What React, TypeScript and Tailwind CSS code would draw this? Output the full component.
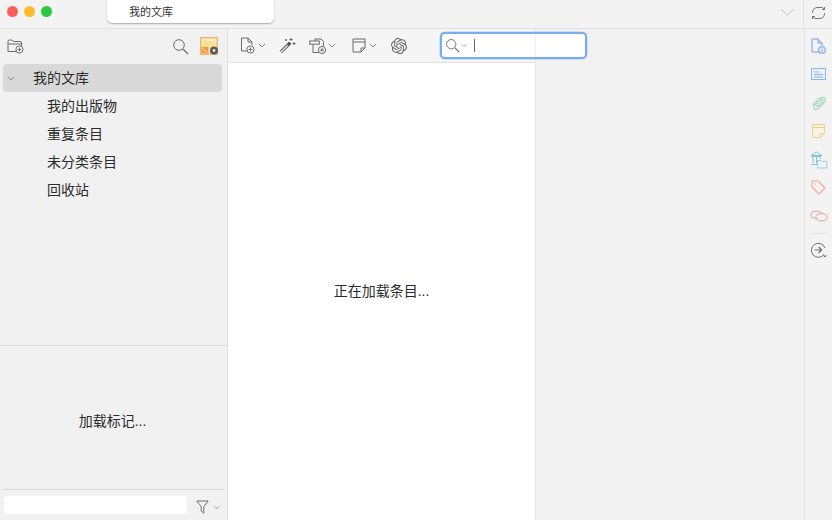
import React from "react";
import { SiOpenai } from "react-icons/si";

const stroke = "#6b6b6b";

function Chevron({ className = "", color = "#8a8a8a" }: { className?: string; color?: string }) {
  return (
    <svg width="8" height="5" viewBox="0 0 8 5" className={className} fill="none">
      <path d="M0.8 0.8 L4 4 L7.2 0.8" stroke={color} strokeWidth="1" />
    </svg>
  );
}

function Plus({ cx, cy, r = 3.6, c = stroke }: { cx: number; cy: number; r?: number; c?: string }) {
  return (
    <g>
      <circle cx={cx} cy={cy} r={r} fill="#f5f5f5" stroke={c} strokeWidth="1" />
      <path d={`M${cx - 2} ${cy}H${cx + 2}M${cx} ${cy - 2}V${cy + 2}`} stroke={c} strokeWidth="0.9" />
    </g>
  );
}

function NewFolder() {
  return (
    <svg width="17" height="16" viewBox="0 0 17 16" fill="none">
      <path d="M1 13.5V3.5Q1 2 2.5 2H5L6.5 3.5H13Q14.5 3.5 14.5 5V8M1 6H14.5M1 13.5H9" stroke={stroke} strokeWidth="1" />
      <Plus cx={12.5} cy={11.5} />
    </svg>
  );
}

function Search({ size = 17 }: { size?: number }) {
  return (
    <svg width={size} height={size} viewBox="0 0 17 17" fill="none">
      <circle cx="7" cy="7" r="5.3" stroke={stroke} strokeWidth="1" />
      <path d="M11 11L16 16" stroke={stroke} strokeWidth="1.3" />
    </svg>
  );
}

function LocateIcon() {
  return (
    <svg width="19" height="18" viewBox="0 0 19 18" fill="none">
      <rect x="0" y="0" width="18" height="18" fill="#f5b66d" />
      <rect x="1.5" y="1.5" width="15" height="15" fill="#fbeecb" />
      <rect x="3" y="4" width="12" height="6" fill="#f8e08c" />
      <rect x="1.5" y="10" width="7" height="6.5" fill="#ef9a3c" />
      <path d="M3 11.5L7 15.5" stroke="#fff" strokeWidth="1" />
      <circle cx="14" cy="13.5" r="4" fill="#5a5a5a" />
      <circle cx="14" cy="13.5" r="1.4" fill="#e5e5e5" />
    </svg>
  );
}

function NewItem() {
  return (
    <svg width="16" height="17" viewBox="0 0 16 17" fill="none">
      <path d="M9.5 14H1.5V1H8L12 5V8M8 1V5H12" stroke={stroke} strokeWidth="1" />
      <Plus cx={10.5} cy={12.5} />
    </svg>
  );
}

function Wand() {
  return (
    <svg width="17" height="17" viewBox="0 0 17 17" fill="none">
      <path d="M1.8 15.2L10.5 6.5" stroke="#5f5f5f" strokeWidth="3.2" />
      <path d="M1.8 15.2L8.6 8.4" stroke="#f5f5f5" strokeWidth="1.3" />
      <path d="M9.5 5.5L11.5 7.5" stroke="#444" strokeWidth="2.2" />
      <path d="M12 1V4M10.5 2.5H13.5M15 5V8M13.5 6.5H16.5M7 2V4M6 3H8" stroke="#555" strokeWidth="0.9" />
    </svg>
  );
}

function AddByIdentifier() {
  return (
    <svg width="19" height="16" viewBox="0 0 19 16" fill="none">
      <path d="M4 5V14.5H10M14.5 8V3.5L12 1H6V3" stroke={stroke} strokeWidth="1" />
      <rect x="0.8" y="3" width="9.5" height="3.2" fill="#f5f5f5" stroke={stroke} strokeWidth="1" />
      <Plus cx={13} cy={12} />
    </svg>
  );
}

function Note() {
  return (
    <svg width="14" height="15" viewBox="0 0 14 15" fill="none">
      <path d="M1 1H13V10L9 14H1Z" stroke={stroke} strokeWidth="1" />
      <path d="M1 4H13M9 14V10H13" stroke={stroke} strokeWidth="1" />
    </svg>
  );
}

function Filter() {
  return (
    <svg width="13" height="14" viewBox="0 0 13 14" fill="none">
      <path d="M0.8 1H12.2L7.8 6.5V13L5.2 11V6.5Z" stroke={stroke} strokeWidth="1" strokeLinejoin="round" />
    </svg>
  );
}

function Sync() {
  return (
    <svg width="15" height="14" viewBox="0 0 15 14" fill="none" stroke="#777" strokeWidth="1">
      <path d="M1.5 7Q1.5 2 6 1.5H11.5L13.5 3.5M13.5 1V3.5H11" />
      <path d="M13.5 7Q13.5 12 9 12.5H3.5L1.5 10.5M1.5 13V10.5H4" />
    </svg>
  );
}

function PaneInfo() {
  const c = "#7c9cf0";
  return (
    <svg width="15" height="16" viewBox="0 0 15 16" fill="none">
      <path d="M8 14H1V1H7L11 5V8M7 1V5H11" stroke={c} strokeWidth="1" />
      <circle cx="11" cy="12" r="3.3" fill="#f2f2f2" stroke={c} strokeWidth="1.1" />
      <path d="M11 11V14M11 10V10.6" stroke={c} strokeWidth="1" />
    </svg>
  );
}

function PaneAbstract() {
  const c = "#8ab4ec";
  return (
    <svg width="15" height="12" viewBox="0 0 15 12" fill="none">
      <rect x="0.5" y="0.5" width="14" height="11" fill="#eaf1fb" stroke={c} />
      <path d="M3 4H8M3 6.5H12M3 9H12" stroke={c} strokeWidth="1" />
    </svg>
  );
}

function PaneAttach() {
  return (
    <svg width="16" height="15" viewBox="0 0 16 15" fill="none">
      <path d="M1.8 9L9 2.2Q11.2 0.4 13.5 2Q15.4 4 13.5 6.2L6.5 13Q4.6 14.3 3.1 13Q1.8 11.4 3.2 9.9L10 3.6Q11 3 11.8 3.7Q12.4 4.6 11.7 5.3L5.4 11.2" stroke="#9ad8ac" strokeWidth="1.1" />
    </svg>
  );
}

function PaneNote() {
  const c = "#f5cf85";
  return (
    <svg width="13" height="14" viewBox="0 0 13 14" fill="none">
      <path d="M0.5 0.5H12.5V9.5L8.5 13.5H0.5Z" fill="#f9f3e4" stroke={c} />
      <path d="M0.5 3.5H12.5M8.5 13.5V9.5H12.5" stroke={c} />
    </svg>
  );
}

function PaneLibraries() {
  const c = "#9ed0e2";
  return (
    <svg width="18" height="18" viewBox="0 0 18 18" fill="none">
      <path d="M1 4.5L6.5 1L12 4.5H1ZM2 5.5H11M1 13.5H7M3 6V12M6.5 6V12M10 6V8" stroke="#86c2d8" strokeWidth="1" />
      <path d="M7.5 17V9.5H11L12 10.5H17V17Z" fill="#edf6f9" stroke={c} strokeWidth="1" />
    </svg>
  );
}

function PaneTag() {
  const c = "#f2a98f";
  return (
    <svg width="15" height="15" viewBox="0 0 15 15" fill="none">
      <path d="M1 1H7L14 8L8 14L1 7Z" stroke={c} strokeWidth="1.1" strokeLinejoin="round" />
      <circle cx="4" cy="4" r="0.8" fill={c} />
    </svg>
  );
}

function PaneRelated() {
  const c = "#eba68e";
  return (
    <svg width="18" height="12" viewBox="0 0 18 12" fill="none">
      <path d="M7.5 8.3H4.8Q0.8 7.8 0.8 4.8Q0.8 1.2 4.8 1.2H8Q11.3 1.5 11.8 4.3" stroke={c} strokeWidth="1" />
      <path d="M5.8 6.3Q6.4 3.8 9.5 3.7H13Q17.2 4 17.2 7.2Q17.2 10.8 13 10.8H10Q6.4 10.6 5.8 6.3Z" stroke={c} strokeWidth="1" />
    </svg>
  );
}

function PaneLocate() {
  return (
    <svg width="18" height="17" viewBox="0 0 18 17" fill="none">
      <path d="M14 12.5A7 7 0 1 1 15 6" stroke="#6e6e6e" strokeWidth="1" />
      <path d="M4.5 8H11.5M8.7 5L11.7 8L8.7 11" stroke="#6e6e6e" strokeWidth="1.1" />
      <path d="M13 13.5H17L15 15.5Z" fill="#6e6e6e" />
    </svg>
  );
}

const font = "font-['Liberation_Sans','Noto_Sans_CJK_SC',sans-serif]";

export default function App() {
  return (
    <div className={`w-[832px] h-[520px] overflow-hidden flex flex-col bg-[#f2f2f2] text-[#2b2b2b] ${font}`}>
      {/* title bar */}
      <div className="h-[29px] shrink-0 flex border-b border-[#e0e0e0] bg-[#f3f3f3]">
        <div className="w-[107px] flex items-start gap-[6px] pl-[7px] pt-[6px]">
          <span className="w-[11px] h-[11px] rounded-full bg-[#f75f58]" />
          <span className="w-[11px] h-[11px] rounded-full bg-[#fbbb2f]" />
          <span className="w-[11px] h-[11px] rounded-full bg-[#2cc840]" />
        </div>
        <div className="w-[167px] h-[23px] bg-white rounded-b-[5px] shadow-[0_0.5px_1.5px_rgba(0,0,0,0.3)] pl-[22px] text-[11px] leading-[24px] text-[#333]">
          我的文库
        </div>
        <div className="flex-1 flex justify-end items-start pr-[8px] pt-[8px]">
          <svg width="15" height="8" viewBox="0 0 15 8" fill="none">
            <path d="M1 1L7.5 7L14 1" stroke="#bdbdbd" strokeWidth="1" />
          </svg>
        </div>
        <div className="w-[29px] border-l border-[#e3e3e3] flex justify-center items-start pt-[6px]">
          <Sync />
        </div>
      </div>

      <div className="flex-1 flex min-h-0">
        {/* sidebar */}
        <div className="w-[228px] shrink-0 border-r border-[#e0e0e0] flex flex-col bg-[#f1f1f1]">
          <div className="h-[35px] shrink-0 flex items-center pl-[7px] pr-[8px] pb-[1px]">
            <NewFolder />
            <div className="flex-1" />
            <Search />
            <div className="w-[11px]" />
            <LocateIcon />
          </div>
          <div className="h-[281px] shrink-0 px-[3px] text-[14px]">
            <div className="h-[28px] w-[219px] rounded-[4px] bg-[#d9d9d9] flex items-center pl-[4px]">
              <Chevron />
              <span className="ml-[18px]">我的文库</span>
            </div>
            {["我的出版物", "重复条目", "未分类条目", "回收站"].map((t) => (
              <div key={t} className="h-[28px] flex items-center pl-[44px]">
                {t}
              </div>
            ))}
          </div>
          <div className="flex-1 min-h-0 flex flex-col border-t border-[#dcdcdc]">
            <div className="flex-1 flex items-center justify-center text-[14px] pt-[8px] pr-[2px]">加载标记...</div>
            <div className="h-[31px] shrink-0 mx-[3px] border-t border-[#d8d8d8] flex items-start pt-[6px] pl-[1px]">
              <div className="w-[183px] h-[18px] bg-white rounded-[3px]" />
              <div className="ml-[9px] mt-[4px] flex items-center gap-[4px]">
                <Filter />
                <Chevron className="scale-75" />
              </div>
            </div>
          </div>
        </div>

        {/* center + right */}
        <div className="flex-1 min-w-0 relative flex">
          <div className="w-[308px] shrink-0 flex flex-col border-r border-[#e6e6e6]">
            <div className="h-[34px] shrink-0 bg-[#f5f5f5] border-b border-[#e2e2e2] flex items-center pl-[12px]">
              <NewItem />
              <Chevron className="ml-[2px]" />
              <div className="ml-[13px]"><Wand /></div>
              <div className="ml-[13px]"><AddByIdentifier /></div>
              <Chevron className="ml-[0px]" />
              <div className="ml-[16px]"><Note /></div>
              <Chevron className="ml-[3px]" />
              <div className="ml-[14px] text-[#666]"><SiOpenai size={16} /></div>
            </div>
            <div className="flex-1 bg-white flex items-center justify-center text-[14px] pb-[0px]">正在加载条目...</div>
          </div>
          <div className="flex-1 bg-[#f2f2f2]" />

          {/* search overlays the pane split */}
          <div className="absolute left-[212px] top-[3px] w-[147px] h-[27px] rounded-[5px] border-2 border-[#78adf0] shadow-[0_0_0_0.5px_#a9ccf5] bg-white flex items-center pl-[3px]">
            <Search size={15} />
            <Chevron className="ml-[0px] scale-75" />
            <span className="ml-[6px] w-px h-[13px] bg-[#666]" />
            <span className="absolute left-[93px] top-0 bottom-0 w-px bg-[#efefef]" />
          </div>

          {/* right rail */}
          <div className="w-[28px] shrink-0 border-l border-[#e3e3e3] flex flex-col items-center bg-[#f3f3f3] pt-[9px]">
            <div className="h-[28px] flex items-start justify-center"><PaneInfo /></div>
            <div className="h-[29px] flex items-start justify-center pt-[2px]"><PaneAbstract /></div>
            <div className="h-[28px] flex items-start justify-center pt-[1px]"><PaneAttach /></div>
            <div className="h-[28px] flex items-start justify-center pt-[1px]"><PaneNote /></div>
            <div className="h-[28px] flex items-start justify-center"><PaneLibraries /></div>
            <div className="h-[29px] flex items-start justify-center pt-[1px]"><PaneTag /></div>
            <div className="h-[25px] flex items-start justify-center pt-[2px]"><PaneRelated /></div>
            <div className="w-[17px] h-px bg-[#e2e2e2]" />
            <div className="mt-[8px]"><PaneLocate /></div>
          </div>
        </div>
      </div>
    </div>
  );
}
